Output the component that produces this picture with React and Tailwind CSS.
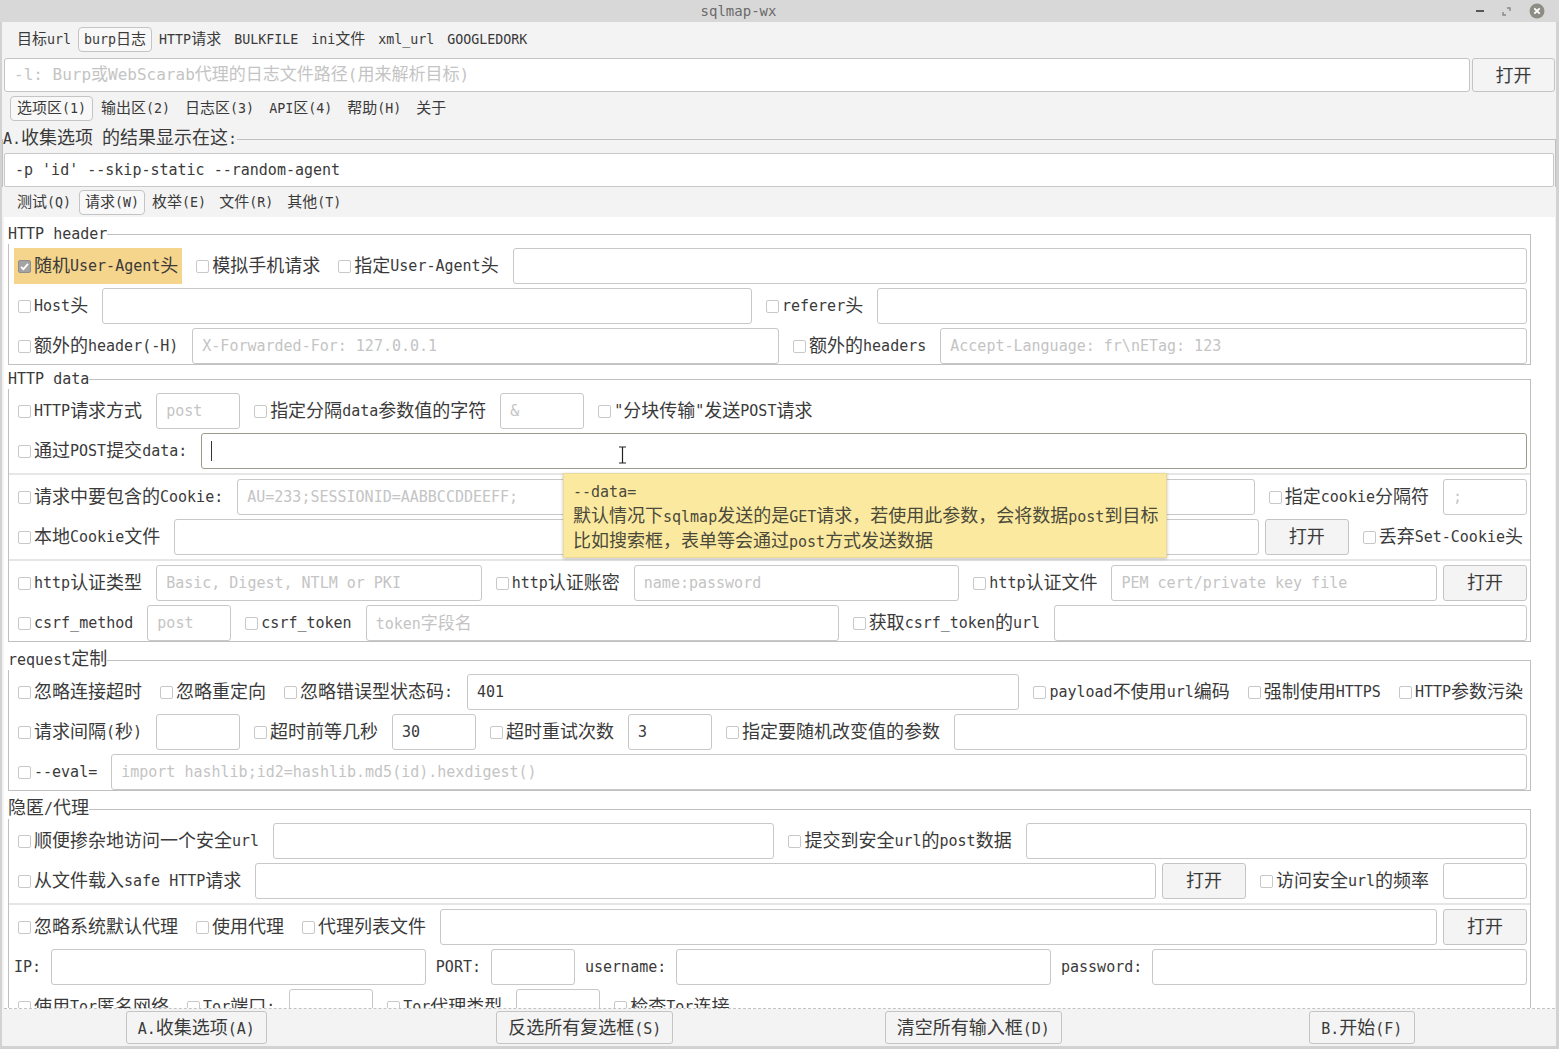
import React from 'react';

const FONT = "font-['DejaVu_Sans_Mono','Noto_Sans_CJK_SC',monospace]";

// Chinese runs are drawn a little larger than the mono Latin, as the GTK font does
const CJK_RE = /([\u2E80-\u9FFF\u3000-\u303F\uFF00-\uFFEF]+)/;

function Mix({ t, c }) {
  return t.split(CJK_RE).map((s, i) =>
    i % 2 ? (
      <span key={i} className={c}>
        {s}
      </span>
    ) : (
      s
    )
  );
}

function Cb({ t, on, hl }) {
  return (
    <span className={`flex items-center h-[36px] px-[4px] shrink-0 whitespace-pre ${hl ? 'bg-[#f5d48b]' : ''}`}>
      <span
        className={`w-[13px] h-[13px] rounded-[2px] border mr-[3px] flex items-center justify-center shrink-0 ${
          on ? 'bg-[#a3a3a3] border-[#8e8e8e]' : 'bg-white border-[#c8c8c8]'
        }`}
      >
        {on && (
          <svg width="11" height="11" viewBox="0 0 11 11">
            <path d="M2 5.8 L4.4 8.2 L9 2.8" fill="none" stroke="#fff" strokeWidth="1.8" />
          </svg>
        )}
      </span>
      <Mix t={t} c="text-[18px]" />
    </span>
  );
}

function Lbl({ t }) {
  return (
    <span className="shrink-0 whitespace-pre">
      <Mix t={t} c="text-[18px]" />
    </span>
  );
}

function Inp({ w, ph, val, focus }) {
  return (
    <div
      className={`h-[36px] rounded-[3px] border bg-white flex items-center pl-[9px] text-[15px] overflow-hidden whitespace-pre ${
        w ? w : 'flex-1 min-w-0'
      } ${focus ? 'border-[#9c9c8c]' : 'border-[#c8c8c8]'}`}
    >
      {focus && <span className="w-[1px] h-[20px] bg-[#333]" />}
      {val ? (
        <span className="text-[#3a3a3a]">{val}</span>
      ) : (
        <span className="text-[#c4c4c4]">{ph && <Mix t={ph} c="text-[17px]" />}</span>
      )}
    </div>
  );
}

function Btn({ t = '打开' }) {
  return (
    <button className="h-[36px] w-[84px] -ml-[4px] shrink-0 rounded-[3px] border border-[#c4c4c4] bg-[#f4f4f4] text-[18px] text-[#3a3a3a]">
      {t}
    </button>
  );
}

function Row({ children }) {
  return <div className="flex items-center gap-[10px] h-[36px]">{children}</div>;
}

function Sep() {
  return <div className="-ml-[5px] -mr-[3px] h-[2px] bg-[#e6e6e6]" />;
}

function Box({ title, mt, children }) {
  return (
    <fieldset className={`border border-[#c0c0c0] pl-[5px] pr-[3px] pt-[4px] ${mt}`}>
      <legend className="-ml-[6px] h-[20px] text-[15px] leading-[20px] text-[#3a3a3a] whitespace-pre">
        <Mix t={title} c="text-[18px] leading-none" />
      </legend>
      <div className="flex flex-col gap-[4px]">{children}</div>
    </fieldset>
  );
}

function Tab({ t, on, px = 'px-[6px]' }) {
  return (
    <span
      className={`h-[25px] ${px} flex items-center rounded-[4px] border whitespace-pre ${
        on ? 'border-[#c4c4c4] bg-[#f8f8f8]' : 'border-transparent'
      }`}
    >
      <Mix t={t} c="text-[15px]" />
    </span>
  );
}

function BarBtn({ t, w }) {
  return (
    <button className={`h-[33px] ${w} rounded-[3px] border border-[#c4c4c4] bg-[#f4f4f4] whitespace-pre`}>
      <Mix t={t} c="text-[18px]" />
    </button>
  );
}

export default function App() {
  return (
    <div className={`relative w-[1559px] h-[1049px] overflow-hidden bg-[#f3f3f3] text-[#3a3a3a] ${FONT}`}>
      {/* title bar */}
      <div className="h-[22px] bg-[#d8d8d8] flex items-center relative">
        <div className="flex-1 text-center pr-[82px] text-[14px] text-[#6a6a6a]">sqlmap-wx</div>
        <div className="absolute right-[14px] top-0 h-[22px] flex items-center gap-[18px]">
          <span className="w-[8px] h-[2px] bg-[#555]" />
          <svg width="9" height="9" viewBox="0 0 9 9">
            <path d="M5 1 H8 V4 M1 5 V8 H4" fill="none" stroke="#888" strokeWidth="1.4" />
          </svg>
          <svg width="16" height="16" viewBox="0 0 16 16">
            <circle cx="8" cy="8" r="7.5" fill="#8d8d84" />
            <path d="M5.3 5.3 L10.7 10.7 M10.7 5.3 L5.3 10.7" stroke="#fff" strokeWidth="1.9" />
          </svg>
        </div>
      </div>

      <div className="border-l-[2px] border-r-[3px] border-[#d2d2d2] h-[1024px] flex flex-col">
        {/* target tabs */}
        <div className="mt-[5px] pl-[9px] flex gap-[1px] text-[13.3px]">
          <Tab t="目标url" px="px-[5px]" />
          <Tab t="burp日志" on px="px-[5px]" />
          <Tab t="HTTP请求" px="px-[5px]" />
          <Tab t="BULKFILE" px="px-[5px]" />
          <Tab t="ini文件" px="px-[5px]" />
          <Tab t="xml_url" px="px-[5px]" />
          <Tab t="GOOGLEDORK" px="px-[5px]" />
        </div>

        <div className="mt-[6px] ml-[2px] flex h-[34px]">
          <div className="flex-1 h-[34px] bg-white border border-[#c4c4c4] rounded-[3px] flex items-center pl-[9px] text-[16px] text-[#c4c4c4] whitespace-pre">
            <Mix t="-l: Burp或WebScarab代理的日志文件路径(用来解析目标)" c="text-[17px]" />
          </div>
          <button className="ml-[2px] w-[83px] h-[34px] mr-[1px] rounded-[3px] border border-[#c4c4c4] bg-[#f4f4f4] text-[18px]">
            打开
          </button>
        </div>

        <div className="mt-[4px] pl-[8px] flex gap-[1px] text-[13.3px]">
          <Tab t="选项区(1)" on />
          <Tab t="输出区(2)" />
          <Tab t="日志区(3)" />
          <Tab t="API区(4)" />
          <Tab t="帮助(H)" />
          <Tab t="关于" />
        </div>

        <fieldset className="mt-[8px] border border-b-0 border-[#c0c0c0] px-[1px] pt-[4px]">
          <legend className="-ml-[1px] h-[20px] text-[15px] leading-[20px] whitespace-pre">
            <Mix t="A.收集选项 的结果显示在这:" c="text-[18px] leading-none" />
          </legend>
          <div className="h-[34px] bg-white border border-[#c8c8c8] rounded-[2px] flex items-center pl-[10px] text-[15px]">
            -p 'id' --skip-static --random-agent
          </div>
        </fieldset>

        <div className="mt-[3px] pl-[8px] flex gap-[1px] text-[13.3px]">
          <Tab t="测试(Q)" />
          <Tab t="请求(W)" on px="px-[5px]" />
          <Tab t="枚举(E)" px="px-[5px]" />
          <Tab t="文件(R)" px="px-[5px]" />
          <Tab t="其他(T)" />
        </div>

        {/* scrolled options panel */}
        <div className="mt-[2px] ml-[2px] mr-[1px] h-[792px] bg-white overflow-hidden border-b border-dashed border-[#c4c4c4] text-[15px] leading-none">
          <div className="pt-[7px] pl-[4px] pr-[24px]">
            <Box title="HTTP header" mt="">
              <Row>
                <Cb t="随机User-Agent头" on hl />
                <Cb t="模拟手机请求" />
                <Cb t="指定User-Agent头" />
                <Inp />
              </Row>
              <Row>
                <Cb t="Host头" />
                <Inp />
                <Cb t="referer头" />
                <Inp />
              </Row>
              <Row>
                <Cb t="额外的header(-H)" />
                <Inp ph="X-Forwarded-For: 127.0.0.1" />
                <Cb t="额外的headers" />
                <Inp ph="Accept-Language: fr\nETag: 123" />
              </Row>
            </Box>

            <Box title="HTTP data" mt="mt-[4px]">
              <Row>
                <Cb t="HTTP请求方式" />
                <Inp w="w-[84px]" ph="post" />
                <Cb t="指定分隔data参数值的字符" />
                <Inp w="w-[84px]" ph="&" />
                <Cb t={'"分块传输"发送POST请求'} />
              </Row>
              <Row>
                <Cb t="通过POST提交data:" />
                <Inp focus />
              </Row>
              <Sep />
              <Row>
                <Cb t="请求中要包含的Cookie:" />
                <Inp ph="AU=233;SESSIONID=AABBCCDDEEFF;" />
                <Cb t="指定cookie分隔符" />
                <Inp w="w-[84px]" ph=";" />
              </Row>
              <Row>
                <Cb t="本地Cookie文件" />
                <Inp />
                <Btn />
                <Cb t="丢弃Set-Cookie头" />
              </Row>
              <Sep />
              <Row>
                <Cb t="http认证类型" />
                <Inp ph="Basic, Digest, NTLM or PKI" />
                <Cb t="http认证账密" />
                <Inp ph="name:password" />
                <Cb t="http认证文件" />
                <Inp ph="PEM cert/private key file" />
                <Btn />
              </Row>
              <Row>
                <Cb t="csrf_method" />
                <Inp w="w-[84px]" ph="post" />
                <Cb t="csrf_token" />
                <Inp ph="token字段名" />
                <Cb t="获取csrf_token的url" />
                <Inp />
              </Row>
            </Box>

            <Box title="request定制" mt="mt-[8px]">
              <Row>
                <Cb t="忽略连接超时" />
                <Cb t="忽略重定向" />
                <Cb t="忽略错误型状态码:" />
                <Inp val="401" />
                <Cb t="payload不使用url编码" />
                <Cb t="强制使用HTTPS" />
                <Cb t="HTTP参数污染" />
              </Row>
              <Row>
                <Cb t="请求间隔(秒)" />
                <Inp w="w-[84px]" />
                <Cb t="超时前等几秒" />
                <Inp w="w-[84px]" val="30" />
                <Cb t="超时重试次数" />
                <Inp w="w-[84px]" val="3" />
                <Cb t="指定要随机改变值的参数" />
                <Inp />
              </Row>
              <Row>
                <Cb t="--eval=" />
                <Inp ph="import hashlib;id2=hashlib.md5(id).hexdigest()" />
              </Row>
            </Box>

            <Box title="隐匿/代理" mt="mt-[8px]">
              <Row>
                <Cb t="顺便掺杂地访问一个安全url" />
                <Inp />
                <Cb t="提交到安全url的post数据" />
                <Inp />
              </Row>
              <Row>
                <Cb t="从文件载入safe HTTP请求" />
                <Inp />
                <Btn />
                <Cb t="访问安全url的频率" />
                <Inp w="w-[84px]" />
              </Row>
              <Sep />
              <Row>
                <Cb t="忽略系统默认代理" />
                <Cb t="使用代理" />
                <Cb t="代理列表文件" />
                <Inp />
                <Btn />
              </Row>
              <Row>
                <Lbl t="IP:" />
                <Inp />
                <Lbl t="PORT:" />
                <Inp w="w-[84px]" />
                <Lbl t="username:" />
                <Inp />
                <Lbl t="password:" />
                <Inp />
              </Row>
              <Row>
                <Cb t="使用Tor匿名网络" />
                <Cb t="Tor端口:" />
                <Inp w="w-[84px]" />
                <Cb t="Tor代理类型" />
                <Inp w="w-[84px]" />
                <Cb t="检查Tor连接" />
              </Row>
            </Box>
          </div>
        </div>

        {/* bottom buttons */}
        <div className="grid grid-cols-4 justify-items-center pt-[2px] text-[15px]">
          <BarBtn t="A.收集选项(A)" w="w-[141px]" />
          <BarBtn t="反选所有复选框(S)" w="w-[177px]" />
          <BarBtn t="清空所有输入框(D)" w="w-[177px]" />
          <BarBtn t="B.开始(F)" w="w-[106px]" />
        </div>
      </div>
      <div className="absolute left-0 right-0 bottom-0 h-[3px] bg-[#d2d2d2]" />

      {/* tooltip for --data */}
      <div className="absolute left-[563px] top-[473px] w-[604px] h-[85px] bg-[#fce9a0] border border-[#eadb9a] shadow-[0_1px_3px_rgba(0,0,0,0.25)] pl-[9px] pt-[7px] text-[15px] leading-[23px] text-[#4a4a3a] whitespace-pre">
        <div>--data=</div>
        <div>
          <Mix t="默认情况下sqlmap发送的是GET请求，若使用此参数，会将数据post到目标" c="text-[18px]" />
        </div>
        <div>
          <Mix t="比如搜索框，表单等会通过post方式发送数据" c="text-[18px]" />
        </div>
      </div>

      {/* mouse pointer (I-beam) */}
      <svg className="absolute left-[618px] top-[446px]" width="9" height="18" viewBox="0 0 9 18">
        <path d="M1 1 H8 M4.5 1 V17 M1 17 H8" fill="none" stroke="#fff" strokeWidth="3" />
        <path d="M1 1 H8 M4.5 1 V17 M1 17 H8" fill="none" stroke="#222" strokeWidth="1.2" />
      </svg>
    </div>
  );
}
